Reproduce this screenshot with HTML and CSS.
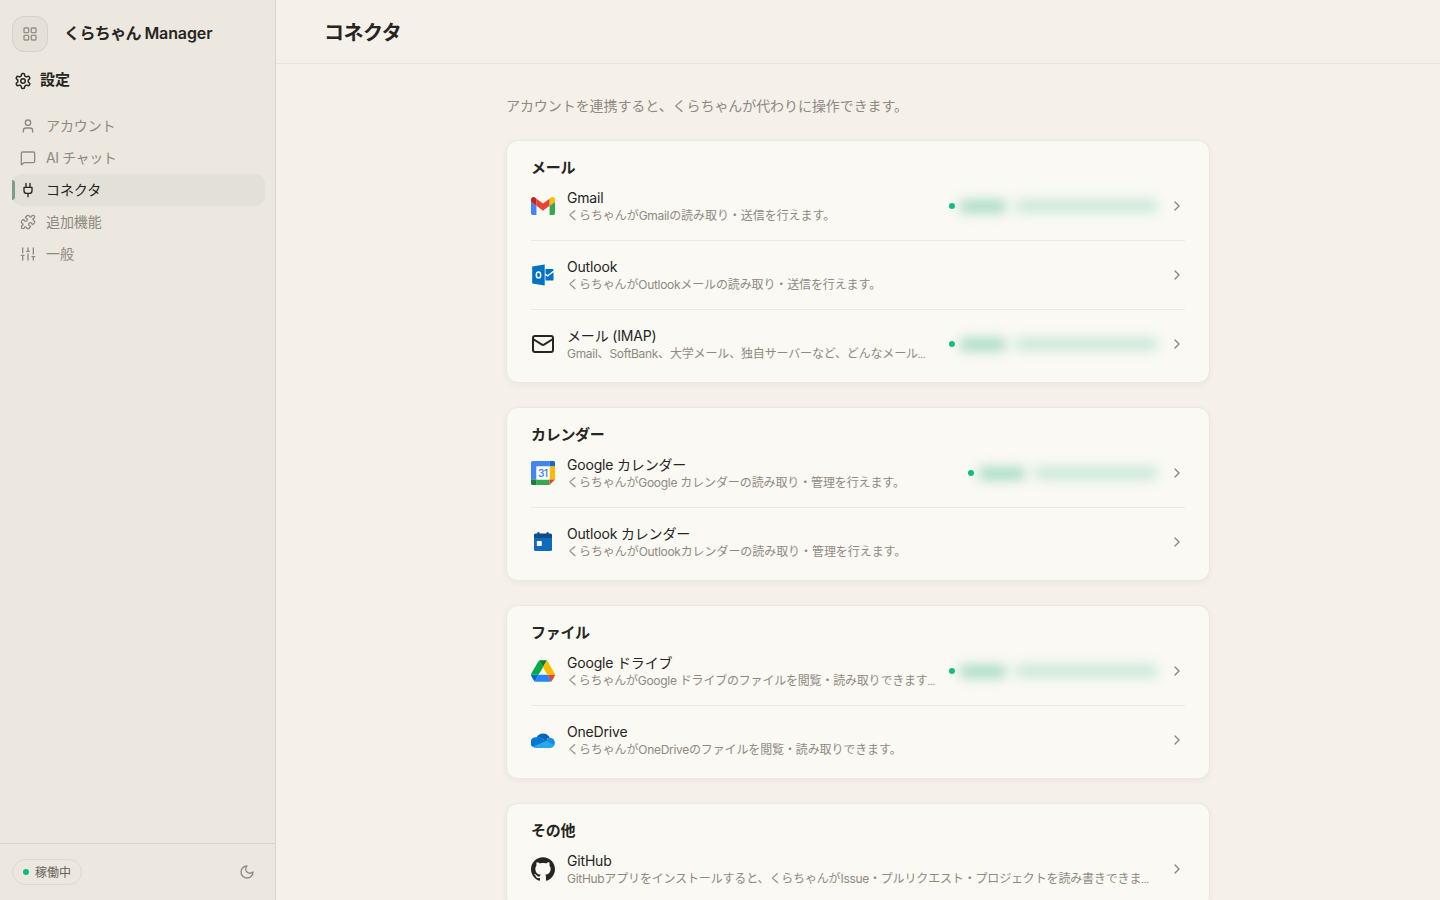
FILE: index.html
```html
<!DOCTYPE html>
<html lang="ja">
<head>
<meta charset="utf-8">
<title>くらちゃん Manager</title>
<link rel="stylesheet" href="styles.css">
</head>
<body>
<svg width="0" height="0" class="defs" aria-hidden="true">
  <symbol id="chev" viewBox="0 0 24 24"><path d="m9 18 6-6-6-6"/></symbol>
</svg>
<div class="app">
  <aside class="sidebar">
    <div class="brand">
      <button class="grid-btn"><svg class="ic" viewBox="0 0 24 24"><rect x="3" y="3" width="7" height="7" rx="1"/><rect x="14" y="3" width="7" height="7" rx="1"/><rect x="14" y="14" width="7" height="7" rx="1"/><rect x="3" y="14" width="7" height="7" rx="1"/></svg></button>
      <span class="brand-name">くらちゃん <span class="brand-latin">Manager</span></span>
    </div>
    <div class="settings"><svg class="ic gear" viewBox="0 0 24 24"><path d="M12.22 2h-.44a2 2 0 0 0-2 2v.18a2 2 0 0 1-1 1.73l-.43.25a2 2 0 0 1-2 0l-.15-.08a2 2 0 0 0-2.73.73l-.22.38a2 2 0 0 0 .73 2.73l.15.1a2 2 0 0 1 1 1.72v.51a2 2 0 0 1-1 1.74l-.15.09a2 2 0 0 0-.73 2.73l.22.38a2 2 0 0 0 2.73.73l.15-.08a2 2 0 0 1 2 0l.43.25a2 2 0 0 1 1 1.73V20a2 2 0 0 0 2 2h.44a2 2 0 0 0 2-2v-.18a2 2 0 0 1 1-1.73l.43-.25a2 2 0 0 1 2 0l.15.08a2 2 0 0 0 2.73-.73l.22-.39a2 2 0 0 0-.73-2.73l-.15-.08a2 2 0 0 1-1-1.74v-.5a2 2 0 0 1 1-1.74l.15-.09a2 2 0 0 0 .73-2.73l-.22-.38a2 2 0 0 0-2.73-.73l-.15.08a2 2 0 0 1-2 0l-.43-.25a2 2 0 0 1-1-1.73V4a2 2 0 0 0-2-2z"/><circle cx="12" cy="12" r="3"/></svg><span>設定</span></div>
    <nav class="nav">
      <a class="nav-item"><svg class="ic" viewBox="0 0 24 24"><path d="M19 21v-2a4 4 0 0 0-4-4H9a4 4 0 0 0-4 4v2"/><circle cx="12" cy="7" r="4"/></svg><span>アカウント</span></a>
      <a class="nav-item"><svg class="ic" viewBox="0 0 24 24"><path d="M22 17a2 2 0 0 1-2 2H6.8a2 2 0 0 0-1.4.6l-2.2 2.2A.7.7 0 0 1 2 21.3V5a2 2 0 0 1 2-2h16a2 2 0 0 1 2 2z"/></svg><span class="ai">AI チャット</span></a>
      <a class="nav-item active"><svg class="ic" viewBox="0 0 24 24"><path d="M12 22v-5M9 8V2M15 8V2M18 8v5a4 4 0 0 1-4 4h-4a4 4 0 0 1-4-4V8Z"/></svg><span>コネクタ</span></a>
      <a class="nav-item"><svg class="ic" viewBox="0 0 24 24"><path d="M15.39 4.39a1 1 0 0 0 1.68-.474 2.5 2.5 0 1 1 3.014 3.015 1 1 0 0 0-.474 1.68l1.683 1.682a2.414 2.414 0 0 1 0 3.414L19.61 15.39a1 1 0 0 1-1.68-.474 2.5 2.5 0 1 0-3.014 3.015 1 1 0 0 1 .474 1.68l-1.683 1.682a2.414 2.414 0 0 1-3.414 0L8.61 19.61a1 1 0 0 0-1.68.474 2.5 2.5 0 1 1-3.014-3.015 1 1 0 0 0 .474-1.68l-1.683-1.682a2.414 2.414 0 0 1 0-3.414L4.39 8.61a1 1 0 0 1 1.68.474 2.5 2.5 0 1 0 3.014-3.015 1 1 0 0 1-.474-1.68l1.683-1.682a2.414 2.414 0 0 1 3.414 0z"/></svg><span>追加機能</span></a>
      <a class="nav-item"><svg class="ic" viewBox="0 0 24 24"><path d="M4 21v-7M4 10V3M12 21v-9M12 8V3M20 21v-5M20 12V3M2 14h4M10 8h4M18 16h4"/></svg><span>一般</span></a>
    </nav>
    <div class="side-foot">
      <span class="pill"><i class="dot"></i><span>稼働中</span></span>
      <svg class="ic moon" viewBox="0 0 24 24"><path d="M12 3a6 6 0 0 0 9 9 9 9 0 1 1-9-9Z"/></svg>
    </div>
  </aside>
  <main class="main">
    <header class="topbar"><h1>コネクタ</h1></header>
    <div class="content">
      <p class="intro">アカウントを連携すると、くらちゃんが代わりに操作できます。</p>

      <section class="card">
        <h2>メール</h2>
        <div class="row">
          <svg class="logo" viewBox="52 42 88 66"><path fill="#4285f4" d="M58 108h14V74L52 59v43c0 3.32 2.69 6 6 6"/><path fill="#34a853" d="M120 108h14c3.32 0 6-2.69 6-6V59l-20 15"/><path fill="#fbbc04" d="M120 48v26l20-15v-8c0-7.42-8.47-11.65-14.4-7.2"/><path fill="#ea4335" d="M72 74V48l24 18 24-18v26L96 92"/><path fill="#c5221f" d="M52 51v8l20 15V48l-5.600-4.200c-5.940-4.450-14.400-.220-14.400 7.200"/></svg>
          <div class="info"><div class="name">Gmail</div><div class="desc">くらちゃんが<b>Gmail</b>の読み取り・送信を行えます。</div></div>
          <div class="status"><i class="dot"></i><span class="masked"><i class="m1"></i><i class="m2"></i></span></div>
          <svg class="ic chev"><use href="#chev"/></svg>
        </div>
        <div class="row">
          <svg class="logo" viewBox="0 0 24 24"><path fill="#0072c6" d="M1.200 3.600 13.700 1.500v21L1.200 20.500zM14.500 6h7.100c.6 0 .9.300.9.900v.7l-5.900 4.500-2.100-1.500zM14.500 12.200l2.100 1.500 5.900-4.500v7.500c0 .6-.3.900-.9.900h-7.100z"/><ellipse cx="7.500" cy="12" rx="2.200" ry="3.100" fill="none" stroke="#fff" stroke-width="1.500"/></svg>
          <div class="info"><div class="name">Outlook</div><div class="desc mid">くらちゃんが<b>Outlook</b>メールの読み取り・送信を行えます。</div></div>
          <svg class="ic chev"><use href="#chev"/></svg>
        </div>
        <div class="row">
          <svg class="logo line" viewBox="0 0 24 24"><rect x="2" y="4" width="20" height="16" rx="2"/><path d="m22 7-8.970 5.700a1.940 1.940 0 0 1-2.060 0L2 7"/></svg>
          <div class="info"><div class="name">メール (IMAP)</div><div class="desc long"><b>Gmail</b>、<b>SoftBank</b>、大学メール、独自サーバーなど、どんなメール<b class="more">…</b></div></div>
          <div class="status"><i class="dot"></i><span class="masked"><i class="m1"></i><i class="m2"></i></span></div>
          <svg class="ic chev"><use href="#chev"/></svg>
        </div>
      </section>

      <section class="card">
        <h2>カレンダー</h2>
        <div class="row">
          <svg class="logo" viewBox="0 0 24 24"><path fill="#4285f4" d="M1.500 0H18.500V5.500H5.500V18.500H0V1.500A1.500 1.500 0 0 1 1.500 0"/><path fill="#1967d2" d="M18.500 0h4A1.500 1.500 0 0 1 24 1.500v4h-5.500z"/><path fill="#fbbc04" d="M18.500 5.500H24v13h-5.500z"/><path fill="#34a853" d="M5.500 18.500h13V24h-13z"/><path fill="#188038" d="M0 18.500h5.500V24h-4A1.500 1.500 0 0 1 0 22.500z"/><path fill="#ea4335" d="M18.500 18.500H24L18.500 24z"/><path fill="#fff" d="M5.500 5.500h13v13h-13z"/><text x="11.800" y="15.500" text-anchor="middle" class="cal-num">31</text></svg>
          <div class="info"><div class="name">Google カレンダー</div><div class="desc mid">くらちゃんが<b>Google</b> カレンダーの読み取り・管理を行えます。</div></div>
          <div class="status"><i class="dot"></i><span class="masked short"><i class="m1"></i><i class="m2"></i></span></div>
          <svg class="ic chev"><use href="#chev"/></svg>
        </div>
        <div class="row">
          <svg class="logo" viewBox="0 0 24 24"><path fill="#0f6cbd" d="M3 8h18v11.500a1.500 1.500 0 0 1-1.500 1.500h-15A1.500 1.500 0 0 1 3 19.500z"/><path fill="#0f4c8a" d="M4.500 3.500H6.300V3a1.100 1.100 0 0 1 2.200 0v.5h7V3a1.100 1.100 0 0 1 2.200 0v.5h1.800A1.500 1.500 0 0 1 21 5v3H3V5a1.500 1.500 0 0 1 1.500-1.500"/><rect x="5.800" y="11" width="5" height="5" rx=".8" fill="#fff"/></svg>
          <div class="info"><div class="name">Outlook カレンダー</div><div class="desc">くらちゃんが<b>Outlook</b>カレンダーの読み取り・管理を行えます。</div></div>
          <svg class="ic chev"><use href="#chev"/></svg>
        </div>
      </section>

      <section class="card">
        <h2>ファイル</h2>
        <div class="row">
          <svg class="logo" viewBox="0 0 87.300 78"><path d="m6.600 66.850 3.850 6.650c.8 1.400 1.950 2.500 3.300 3.300l13.750-23.800H0c0 1.550.4 3.100 1.200 4.500z" fill="#0066da"/><path d="M43.650 25 29.900 1.200c-1.350.8-2.500 1.900-3.300 3.300L1.200 48.500A9 9 0 0 0 0 53h27.500z" fill="#00ac47"/><path d="M73.550 76.800c1.350-.8 2.500-1.900 3.300-3.300l1.600-2.750L86.100 57.500c.8-1.400 1.200-2.950 1.200-4.500H59.800l5.850 11.500z" fill="#ea4335"/><path d="M43.650 25 57.400 1.200C56.050.4 54.500 0 52.900 0H34.400c-1.600 0-3.150.45-4.500 1.200z" fill="#00832d"/><path d="M59.800 53H27.500L13.750 76.800c1.350.8 2.900 1.200 4.500 1.200h50.800c1.600 0 3.150-.45 4.500-1.200z" fill="#2684fc"/><path d="M73.400 26.500 60.700 4.500c-.8-1.400-1.950-2.500-3.300-3.300L43.650 25 59.800 53h27.450c0-1.550-.4-3.100-1.200-4.500z" fill="#ffba00"/></svg>
          <div class="info"><div class="name">Google ドライブ</div><div class="desc longer">くらちゃんが<b>Google</b> ドライブのファイルを閲覧・読み取りできます<b class="more">…</b></div></div>
          <div class="status"><i class="dot"></i><span class="masked"><i class="m1"></i><i class="m2"></i></span></div>
          <svg class="ic chev"><use href="#chev"/></svg>
        </div>
        <div class="row">
          <svg class="logo" viewBox="0 0 24 24"><path fill="#28a8ea" d="M2 17.500 14.600 12l8.900 5a4.800 4.800 0 0 1-4.500 3H5.200a5.200 5.200 0 0 1-3.700-1.600z"/><path fill="#0078d4" d="M5.200 9.300c1.700-.4 3.300-.1 4.700.7l5.200 3L1.700 18.700A5.200 5.200 0 0 1 5.200 9.300"/><path fill="#1490df" d="M17.900 9.700h.8A5.200 5.200 0 0 1 23.300 17.300L14.800 12.800z"/><path fill="#0364b8" d="M5.800 9.200A7.200 7.200 0 0 1 18.700 9.700c-1.500.1-2.600.9-3.700 3.300L9.900 10c-1.200-.7-2.600-1-4.100-.8"/></svg>
          <div class="info"><div class="name">OneDrive</div><div class="desc mid">くらちゃんが<b>OneDrive</b>のファイルを閲覧・読み取りできます。</div></div>
          <svg class="ic chev"><use href="#chev"/></svg>
        </div>
      </section>

      <section class="card">
        <h2>その他</h2>
        <div class="row">
          <svg class="logo" viewBox="0 0 24 24"><path fill="#262522" d="M12 .297c-6.630 0-12 5.373-12 12 0 5.303 3.438 9.800 8.205 11.385.6.113.82-.258.82-.577 0-.285-.010-1.040-.015-2.040-3.338.724-4.042-1.610-4.042-1.610C4.422 18.070 3.633 17.700 3.633 17.700c-1.087-.744.084-.729.084-.729 1.205.084 1.838 1.236 1.838 1.236 1.070 1.835 2.809 1.305 3.495.998.108-.776.417-1.305.76-1.605-2.665-.3-5.466-1.332-5.466-5.930 0-1.310.465-2.380 1.235-3.220-.135-.303-.54-1.523.105-3.176 0 0 1.005-.322 3.300 1.230.96-.267 1.980-.399 3-.405 1.020.006 2.040.138 3 .405 2.280-1.552 3.285-1.230 3.285-1.230.645 1.653.24 2.873.12 3.176.765.840 1.230 1.910 1.230 3.220 0 4.610-2.805 5.625-5.475 5.920.42.360.81 1.096.81 2.220 0 1.606-.015 2.896-.015 3.286 0 .315.21.690.825.570C20.565 22.092 24 17.592 24 12.297c0-6.627-5.373-12-12-12"/></svg>
          <div class="info"><div class="name">GitHub</div><div class="desc long"><b>GitHub</b>アプリをインストールすると、くらちゃんが<b>Issue</b>・プルリクエスト・プロジェクトを読み書きできま<b class="more">…</b></div></div>
          <svg class="ic chev"><use href="#chev"/></svg>
        </div>
      </section>
    </div>
  </main>
</div>
</body>
</html>
```
FILE: styles.css
```css
* { box-sizing: border-box; }
body {
  margin: 0;
  font-family: Inter, "Noto Sans CJK JP", sans-serif;
  color: #262522;
  background: #f5f0ea;
}
h1, h2, p { margin: 0; }
b { font-weight: inherit; }
.defs { position: absolute; }
.app { display: flex; height: 900px; overflow: hidden; }
.ic {
  width: 16px; height: 16px; flex: none;
  fill: none; stroke: currentColor; stroke-width: 2;
  stroke-linecap: round; stroke-linejoin: round;
}
.sidebar {
  width: 276px; flex: none;
  display: flex; flex-direction: column;
  background: #ece7df;
  border-right: 1px solid #d9d5cd;
}
.brand { display: flex; align-items: center; gap: 16px; padding: 16px 12px 0; height: 52px; }
.grid-btn {
  width: 36px; height: 36px; padding: 0;
  display: flex; align-items: center; justify-content: center;
  border: 1px solid #d6d2c8; border-radius: 12px;
  background: #e5e1d8; color: #969184;
}
.brand-name { font-size: 16px; font-weight: 600; letter-spacing: -.6px; white-space: nowrap; line-height: 34px; height: 36px; }
.brand-latin { letter-spacing: -.1px; }
.settings {
  display: flex; align-items: center; gap: 8px;
  height: 32px; margin-top: 13px; padding-left: 14px;
  font-size: 15px; font-weight: 600;
}
.settings span { padding-bottom: 5px; }
.gear { width: 18px; height: 18px; }
.nav { margin-top: 13px; padding: 0 10px 0 12px; display: flex; flex-direction: column; }
.nav-item {
  position: relative; display: flex; align-items: center; gap: 10px;
  height: 32px; padding-left: 8px; border-radius: 10px;
  font-size: 14px; color: #8f8a80;
}
.nav-item span { padding-bottom: 2px; letter-spacing: -.1px; }
.nav-item .ai { letter-spacing: -.4px; }
.nav-item.active { color: #262522; background: #e3e0d7; }
.nav-item.active::before {
  content: ""; position: absolute; left: 0; top: 6px;
  width: 3px; height: 20px; border-radius: 0 3px 3px 0; background: #7c9d8c;
}
.side-foot {
  margin-top: auto; height: 57px; padding: 0 20px 0 12px;
  display: flex; align-items: center; justify-content: space-between;
  border-top: 1px solid #d9d5cd;
}
.pill {
  display: flex; align-items: center; gap: 6px;
  height: 26px; padding: 0 10px;
  border: 1px solid #dedad1; border-radius: 13px;
  font-size: 12px; color: #65615a;
}
.pill span { padding-bottom: 2px; }
.dot { width: 6px; height: 6px; flex: none; border-radius: 50%; background: #08bd80; }
.moon { color: #8f8a80; }
.main { flex: 1; min-width: 0; }
.topbar { height: 64px; padding: 2px 0 0 48px; border-bottom: 1px solid #e8e3dc; }
.topbar h1 { font-size: 20px; line-height: 61px; font-weight: 700; letter-spacing: -.5px; padding-top: 1px; }
.content { width: 704px; margin: 0 auto; padding-top: 32px; }
.intro { font-size: 14px; line-height: 20px; color: #8f8a80; margin-bottom: 24px; letter-spacing: -.07px; }
.card {
  margin-bottom: 24px; padding: 16px 24px 20px;
  border: 1px solid #ece8e1; border-radius: 12px;
  background: #faf9f4;
  box-shadow: 0 2px 6px rgba(60, 50, 35, .05);
}
.card h2 { font-size: 15px; line-height: 22px; font-weight: 600; margin-bottom: 9px; letter-spacing: -.3px; }
.row {
  display: flex; align-items: center;
  padding: 16px 0; border-top: 1px solid #ebe9e4;
}
h2 + .row { padding-top: 0; border-top: 0; }
.row:last-child { padding-bottom: 0; }
.logo { width: 24px; height: 24px; flex: none; margin-right: 12px; }
.logo.line { fill: none; stroke: #262522; stroke-width: 2; stroke-linejoin: round; stroke-linecap: round; }
.cal-num { font-size: 10px; font-weight: 600; fill: #4285f4; letter-spacing: -.4px; }
.info { flex: 1; min-width: 0; white-space: nowrap; }
.name { font-size: 14px; line-height: 20px; letter-spacing: -.18px; }
.desc { height: 16px; font-size: 12px; line-height: 16px; color: #8f8a80; letter-spacing: -.06px; }
.desc.mid { letter-spacing: -.12px; }
.desc.long { letter-spacing: -.16px; }
.desc.longer { letter-spacing: -.2px; }
.desc b { letter-spacing: -.3px; }
.desc .more { font-size: 9px; line-height: 0; }
.status { display: flex; align-items: center; gap: 5px; margin-right: 12px; }
.masked { display: flex; align-items: center; gap: 10px; width: 197px; height: 16px; filter: blur(6px); }
.masked.short { width: 178px; }
.m1 { width: 46px; height: 13px; border-radius: 4px; background: #a9dcc3; }
.m2 { flex: 1; height: 12px; border-radius: 4px; background: #c6e7d7; }
.chev { color: #8b877e; }
```
